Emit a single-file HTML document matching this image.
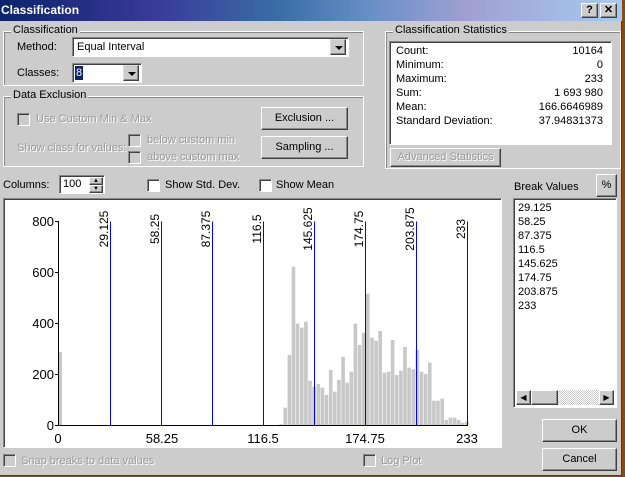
<!DOCTYPE html>
<html><head><meta charset="utf-8"><style>
*{box-sizing:border-box;margin:0;padding:0}
body{width:625px;height:477px;overflow:hidden;background:#8a4a10;font-family:"Liberation Sans",sans-serif;font-size:11px;color:#000;position:relative}
.dlg{position:absolute;left:0;top:0;width:622px;height:476px;background:#cccccc;border-right:1px solid #404040;border-bottom:1px solid #404040}
.a{position:absolute;white-space:nowrap}
.title{position:absolute;left:0;top:0;width:622px;height:21px;background:linear-gradient(90deg,#0a246a 0%,#3a3a9a 25%,#3a6ea5 45%,#6a90c8 60%,#a0a0d0 75%,#a6caf0 100%);color:#fff;font-weight:bold;font-size:12px;line-height:21px;padding-left:1px}
.grp{position:absolute;border:1px solid #fff;box-shadow:inset 1px 1px 0 #888;outline:none}
.grp span{position:absolute;top:-8px;left:7px;background:#ccc;padding:0 2px;font-size:11px}
.btn{position:absolute;background:#ccc;border:1px solid;border-color:#fff #404040 #404040 #fff;box-shadow:inset -1px -1px 0 #888;text-align:center;font-size:11px}
.sunk{position:absolute;background:#fff;border:1px solid;border-color:#888 #fff #fff #888;box-shadow:inset 1px 1px 0 #404040}
.cb{position:absolute;width:13px;height:13px;background:#fff;border:1px solid;border-color:#888 #fff #fff #888;box-shadow:inset 1px 1px 0 #404040}
.cb.d{background:#ccc}
.dis{color:#9a9a9a;text-shadow:1px 1px 0 #fff}
.dd{position:absolute;width:16px;background:#ccc;border:1px solid;border-color:#ddd #404040 #404040 #ddd;box-shadow:inset -1px -1px 0 #888}
.dd:after{content:"";position:absolute;left:4px;top:6px;border-left:4px solid transparent;border-right:4px solid transparent;border-top:4px solid #000}
.row{position:absolute;left:6px;right:8px;height:14px;line-height:14px}
.row b{font-weight:normal;position:absolute;right:0}
</style></head><body>
<div class="dlg">
<div class="title">Classification</div>
<div class="btn" style="left:581px;top:3px;width:17px;height:15px;line-height:13px;font-weight:bold">?</div>
<div class="btn" style="left:600px;top:3px;width:17px;height:15px;line-height:13px;font-weight:bold">✕</div>

<div class="grp" style="left:3px;top:31px;width:361px;height:55px"><span>Classification</span></div>
<div class="a" style="left:17px;top:41px">Method:</div>
<div class="sunk" style="left:72px;top:37px;width:277px;height:20px"><div class="a" style="left:4px;top:3px">Equal Interval</div><div class="dd" style="right:2px;top:2px;height:16px;top:1px"></div></div>
<div class="a" style="left:17px;top:67px">Classes:</div>
<div class="sunk" style="left:72px;top:63px;width:70px;height:20px"><div class="a" style="left:2px;top:2px;background:#0a246a;color:#fff;padding:0 1px;line-height:14px">8</div><div class="dd" style="right:2px;top:1px;height:16px"></div></div>

<div class="grp" style="left:3px;top:96px;width:361px;height:71px"><span>Data Exclusion</span></div>
<div class="cb d" style="left:17px;top:113px"></div><div class="a dis" style="left:36px;top:113px">Use Custom Min &amp; Max</div>
<div class="a dis" style="left:17px;top:142px">Show class for values:</div>
<div class="cb d" style="left:128px;top:134px"></div><div class="a dis" style="left:147px;top:134px">below custom min</div>
<div class="cb d" style="left:128px;top:151px"></div><div class="a dis" style="left:147px;top:151px">above custom max</div>
<div class="btn" style="left:261px;top:107px;width:87px;height:23px;line-height:21px">Exclusion ...</div>
<div class="btn" style="left:261px;top:136px;width:87px;height:23px;line-height:21px">Sampling ...</div>

<div class="grp" style="left:385px;top:31px;width:236px;height:138px"><span>Classification Statistics</span></div>
<div class="sunk" style="left:389px;top:41px;width:223px;height:104px">
<div class="row" style="top:2px">Count:<b>10164</b></div>
<div class="row" style="top:16px">Minimum:<b>0</b></div>
<div class="row" style="top:30px">Maximum:<b>233</b></div>
<div class="row" style="top:44px">Sum:<b>1 693 980</b></div>
<div class="row" style="top:58px">Mean:<b>166.6646989</b></div>
<div class="row" style="top:72px">Standard Deviation:<b>37.94831373</b></div>
</div>
<div class="btn dis" style="left:390px;top:148px;width:111px;height:19px;line-height:17px">Advanced Statistics</div>

<div class="a" style="left:3px;top:179px">Columns:</div>
<div class="sunk" style="left:59px;top:175px;width:46px;height:19px"><div class="a" style="left:3px;top:2px">100</div>
<div class="btn" style="left:29px;top:1px;width:14px;height:8px;font-size:6px;line-height:6px">▲</div><div class="btn" style="left:29px;top:9px;width:14px;height:8px;font-size:6px;line-height:6px">▼</div></div>
<div class="cb" style="left:147px;top:179px"></div><div class="a" style="left:165px;top:179px">Show Std. Dev.</div>
<div class="cb" style="left:259px;top:179px"></div><div class="a" style="left:276px;top:179px">Show Mean</div>

<div class="a" style="left:514px;top:181px">Break Values</div>
<div class="btn" style="left:596px;top:174px;width:21px;height:23px;line-height:20px">%</div>
<div class="sunk" style="left:513px;top:198px;width:104px;height:210px">
<div class="a" style="left:4px;top:2px;line-height:14px">29.125<br>58.25<br>87.375<br>116.5<br>145.625<br>174.75<br>203.875<br>233</div>
<div class="a" style="left:2px;top:191px;width:98px;height:15px;background:repeating-conic-gradient(#fff 0 25%,#ccc 0 50%) 0 0/2px 2px"></div>
<div class="btn" style="left:2px;top:191px;width:15px;height:15px;font-size:8px;line-height:13px">◀</div>
<div class="btn" style="left:17px;top:191px;width:27px;height:15px"></div>
<div class="btn" style="left:85px;top:191px;width:15px;height:15px;font-size:8px;line-height:13px">▶</div>
</div>
<div class="btn" style="left:542px;top:419px;width:75px;height:23px;line-height:21px">OK</div>
<div class="btn" style="left:542px;top:448px;width:75px;height:23px;line-height:21px">Cancel</div>

<div class="sunk" style="left:3px;top:198px;width:499px;height:250px"></div>
<svg class="a" style="left:0;top:0" width="625" height="477" font-family="Liberation Sans,sans-serif" font-size="13">
<g fill="#c8c8c8">
<rect x="58" y="352" width="4" height="73"/>
<rect x="279.3" y="424.3" width="3.6" height=".7"/><rect x="283.4" y="407.7" width="3.6" height="17.3"/><rect x="287.6" y="355" width="3.6" height="70"/><rect x="291.7" y="266.7" width="3.6" height="158.3"/><rect x="295.8" y="323.7" width="3.6" height="101.3"/><rect x="300" y="327.7" width="3.6" height="97.3"/><rect x="304.1" y="321.7" width="3.6" height="103.3"/><rect x="308.2" y="380.7" width="3.6" height="44.3"/><rect x="312.3" y="386.7" width="3.6" height="38.3"/><rect x="316.5" y="384" width="3.6" height="41"/><rect x="320.6" y="387.7" width="3.6" height="37.3"/><rect x="324.7" y="395" width="3.6" height="30"/><rect x="328.9" y="370" width="3.6" height="55"/><rect x="333" y="391.7" width="3.6" height="33.3"/><rect x="337.1" y="380" width="3.6" height="45"/><rect x="341.3" y="356.7" width="3.6" height="68.3"/><rect x="345.4" y="382.7" width="3.6" height="42.3"/><rect x="349.5" y="371.7" width="3.6" height="53.3"/><rect x="353.6" y="323.7" width="3.6" height="101.3"/><rect x="357.8" y="345" width="3.6" height="80"/><rect x="361.9" y="332.7" width="3.6" height="92.3"/><rect x="366" y="293.7" width="3.6" height="131.3"/><rect x="370.2" y="337.7" width="3.6" height="87.3"/><rect x="374.3" y="340.7" width="3.6" height="84.3"/><rect x="378.4" y="331" width="3.6" height="94"/><rect x="382.6" y="372.7" width="3.6" height="52.3"/><rect x="386.7" y="371.7" width="3.6" height="53.3"/><rect x="390.8" y="340" width="3.6" height="85"/><rect x="394.9" y="375" width="3.6" height="50"/><rect x="399.1" y="370.7" width="3.6" height="54.3"/><rect x="403.2" y="347" width="3.6" height="78"/><rect x="407.3" y="367.7" width="3.6" height="57.3"/><rect x="411.5" y="369.3" width="3.6" height="55.7"/><rect x="415.6" y="350" width="3.6" height="75"/><rect x="419.7" y="371.7" width="3.6" height="53.3"/><rect x="423.9" y="374" width="3.6" height="51"/><rect x="428" y="362.7" width="3.6" height="62.3"/><rect x="432.1" y="400.7" width="3.6" height="24.3"/><rect x="436.2" y="400.7" width="3.6" height="24.3"/><rect x="440.4" y="398.7" width="3.6" height="26.3"/><rect x="444.5" y="420" width="3.6" height="5"/><rect x="448.6" y="417.7" width="3.6" height="7.3"/><rect x="452.8" y="417.7" width="3.6" height="7.3"/><rect x="456.9" y="420" width="3.6" height="5"/><rect x="461" y="422.7" width="3.6" height="2.3"/><rect x="465.2" y="421.7" width="3.6" height="3.3"/>
</g>
<g stroke="#0000ff" stroke-width="1">
<path d="M110.5 221.5V425M161.5 221.5V425M212.5 221.5V425M263.5 221.5V425M314.5 221.5V425M365.5 221.5V425M416.5 221.5V425M467.5 221.5V425"/>
</g>
<g stroke="#000" stroke-width="1">
<path d="M58.5 221V426M58 425.5H468M55 221.5H59M55 272.5H59M55 323.5H59M55 374.5H59M55 425.5H59"/>
</g>
<g text-anchor="end">
<text x="54" y="226">800</text><text x="54" y="277">600</text><text x="54" y="328">400</text><text x="54" y="379">200</text><text x="54" y="430">0</text>
</g>
<g text-anchor="middle">
<text x="58" y="443">0</text><text x="162" y="443">58.25</text><text x="263" y="443">116.5</text><text x="365" y="443">174.75</text><text x="467" y="443">233</text>
</g>
<g text-anchor="middle" font-size="12">
<text transform="translate(108,229) rotate(-90)">29.125</text>
<text transform="translate(159,229) rotate(-90)">58.25</text>
<text transform="translate(210,229) rotate(-90)">87.375</text>
<text transform="translate(261,229) rotate(-90)">116.5</text>
<text transform="translate(312,229) rotate(-90)">145.625</text>
<text transform="translate(363,229) rotate(-90)">174.75</text>
<text transform="translate(414,229) rotate(-90)">203.875</text>
<text transform="translate(465,229) rotate(-90)">233</text>
</g>
</svg>

<div class="cb d" style="left:3px;top:454px"></div><div class="a dis" style="left:21px;top:455px">Snap breaks to data values</div>
<div class="cb d" style="left:363px;top:454px"></div><div class="a dis" style="left:381px;top:455px">Log Plot</div>
</div>
</body></html>
